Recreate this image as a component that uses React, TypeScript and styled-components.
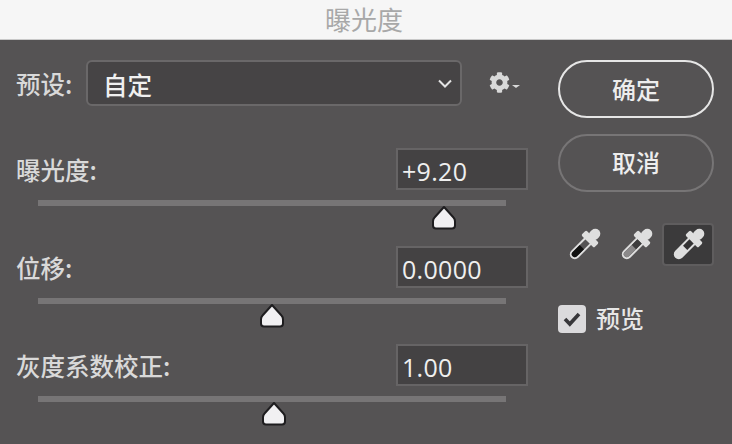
import React from "react";
import styled, { createGlobalStyle } from "styled-components";
import { FaCog } from "react-icons/fa";

const Global = createGlobalStyle`
  html, body { margin: 0; padding: 0; background: #555354; }
  * { box-sizing: border-box; }
`;
const CJK = `"Noto Sans CJK SC", "Liberation Sans", sans-serif`;

const Dialog = styled.div`
  width: 732px; height: 444px; display: flex; flex-direction: column; overflow: hidden;
  background: #555354; font-family: ${CJK};
`;
const TitleBar = styled.header`
  height: 40px; flex: none; display: flex; align-items: center; justify-content: center;
  padding: 0 4px 2px 0;
  background: #f6f6f6; border-bottom: 1px solid #c9c9c9;
  color: #a8a8a8; font-size: 26px; line-height: 36px;
`;
const Body = styled.main`
  flex: 1; display: flex; justify-content: space-between; padding: 20px 18px 0 16px;
`;
const LeftColumn = styled.section`
  width: 512px; display: flex; flex-direction: column;
`;
const PresetRow = styled.div`
  height: 46px; display: flex; align-items: center; margin-bottom: 42px;
`;
const Label = styled.span`
  color: #d9d9d9; font-size: 24.5px; font-weight: 500; line-height: 42px; white-space: nowrap;
  padding-top: 2px;
`;
const PresetLabel = styled(Label)`
  width: 70px; flex: none;
`;
const SelectBox = styled.div`
  width: 376px; height: 46px; flex: none; display: flex; align-items: center; justify-content: space-between;
  padding: 2px 6px 0 15px; background: #464445; border: 2px solid #6a6869; border-radius: 6px;
  color: #f0f0f0; font-size: 24.5px; font-weight: 500;
`;
const GearButton = styled.div`
  margin-left: 27px; display: flex; align-items: center; color: #d9d9d9; position: relative; top: -1px;
`;
const Caret = styled.span`
  margin: 9px 0 0 2px; width: 0; height: 0;
  border-left: 4px solid transparent; border-right: 4px solid transparent; border-top: 3px solid #d9d9d9;
`;
const SliderGroup = styled.div`
  height: 98px; display: flex; flex-direction: column;
`;
const SliderHead = styled.div`
  height: 42px; flex: none; display: flex; justify-content: space-between; align-items: center;
`;
const NumberBox = styled.div`
  width: 132px; height: 42px; display: flex; align-items: center; padding: 3px 0 0 4px;
  background: #444243; border: 2px solid #666465;
  color: #efefef; font-family: "Open Sans", "Liberation Sans", sans-serif; font-size: 25px; letter-spacing: 0.3px;
`;
const Track = styled.div`
  position: relative; height: 6px; margin: 10px 22px 0; background: #777576;
`;
const Thumb = styled.svg<{ $at: number }>`
  position: absolute; top: 6px; left: ${(p) => p.$at}%; width: 24px; height: 24px; margin-left: -12px;
`;
const RightColumn = styled.aside`
  width: 156px; display: flex; flex-direction: column;
`;
const PillButton = styled.button<{ $primary?: boolean }>`
  width: 156px; height: 58px; margin-bottom: 16px; padding: 0 0 ${(p) => (p.$primary ? "1px" : "3px")};
  background: transparent; border-radius: 29px;
  border: 2px solid ${(p) => (p.$primary ? "#e6e6e6" : "#777576")};
  color: #ededed; font-family: ${CJK}; font-size: 24px; font-weight: 500;
`;
const ToolRow = styled.div`
  height: 43px; margin-top: 15px; display: flex;
`;
const Tool = styled.div<{ $active?: boolean }>`
  flex: 1; display: flex; align-items: center; justify-content: center; border-radius: 4px;
  background: ${(p) => (p.$active ? "#3b3a3b" : "transparent")};
  border: 2px solid ${(p) => (p.$active ? "#5f5d5e" : "transparent")};
`;
const PreviewRow = styled.label`
  margin-top: 39px; height: 28px; display: flex; align-items: center; gap: 10px;
  color: #e6e6e6; font-size: 24px; font-weight: 500;
`;
const PreviewText = styled.span`
  margin-top: -3px;
`;
const CheckBox = styled.span`
  width: 28px; height: 28px; display: flex; align-items: center; justify-content: center;
  background: #dbdadc; border-radius: 4px;
`;

const ThumbIcon = ({ at }: { at: number }) => (
  <Thumb $at={at} viewBox="0 0 24 24">
    <path
      d="M12 1 L21.5 11.5 Q23 13 23 15.5 L23 19.5 Q23 22.5 20 22.5 L4 22.5 Q1 22.5 1 19.5 L1 15.5 Q1 13 2.5 11.5 Z"
      fill="#f1f0f2" stroke="#1e1d1f" strokeWidth="2" strokeLinejoin="round"
    />
  </Thumb>
);

const Dropper = ({ kind }: { kind: "black" | "gray" | "white" }) => (
  <svg width="34" height="34" viewBox="0 0 34 34">
    <g transform="rotate(45 17 17)">
      <rect x="12" y="-4" width="10" height="12" rx="5" fill="#dedede" />
      <rect x="8" y="5" width="18" height="7" rx="1.5" fill="#dedede" />
      {kind === "black" && (
        <>
          <path d="M13 11 H21 V30 a4 4 0 0 1 -8 0 Z" fill="#555354" stroke="#dedede" strokeWidth="2" />
          <path d="M14 20 H20 V30 a3 3 0 0 1 -6 0 Z" fill="#111" />
        </>
      )}
      {kind === "gray" && (
        <>
          <path d="M13 11 H21 V30 a4 4 0 0 1 -8 0 Z" fill="#555354" stroke="#dedede" strokeWidth="2" />
          <path d="M14 12 H20 V20 H14 Z" fill="#3d3c3d" />
          <path d="M14 20 H20 V30 a3 3 0 0 1 -6 0 Z" fill="#8b898a" />
        </>
      )}
      {kind === "white" && (
        <>
          <path d="M12 11 H22 V30 a5 5 0 0 1 -10 0 Z" fill="#dedede" />
          <path d="M14 12 H20 V21 H14 Z" fill="#333233" />
        </>
      )}
    </g>
  </svg>
);

const sliders = [
  { label: "曝光度:", value: "+9.20", at: 86.75 },
  { label: "位移:", value: "0.0000", at: 50 },
  { label: "灰度系数校正:", value: "1.00", at: 50.4 },
];

export default function App() {
  return (
    <Dialog>
      <Global />
      <TitleBar>曝光度</TitleBar>
      <Body>
        <LeftColumn>
          <PresetRow>
            <PresetLabel>预设:</PresetLabel>
            <SelectBox>
              自定
              <svg width="18" height="12" viewBox="0 0 18 12">
                <path d="M3 2.5 L9 8.5 L15 2.5" fill="none" stroke="#e4e4e4" strokeWidth="2" />
              </svg>
            </SelectBox>
            <GearButton>
              <FaCog size={21} />
              <Caret />
            </GearButton>
          </PresetRow>
          {sliders.map((s) => (
            <SliderGroup key={s.label}>
              <SliderHead>
                <Label>{s.label}</Label>
                <NumberBox>{s.value}</NumberBox>
              </SliderHead>
              <Track>
                <ThumbIcon at={s.at} />
              </Track>
            </SliderGroup>
          ))}
        </LeftColumn>
        <RightColumn>
          <PillButton $primary>确定</PillButton>
          <PillButton>取消</PillButton>
          <ToolRow>
            <Tool><Dropper kind="black" /></Tool>
            <Tool><Dropper kind="gray" /></Tool>
            <Tool $active><Dropper kind="white" /></Tool>
          </ToolRow>
          <PreviewRow>
            <CheckBox>
              <svg width="18" height="16" viewBox="0 0 18 16">
                <path d="M2 8 L6.8 13 L16 3" fill="none" stroke="#38373a" strokeWidth="3.6" />
              </svg>
            </CheckBox>
            <PreviewText>预览</PreviewText>
          </PreviewRow>
        </RightColumn>
      </Body>
    </Dialog>
  );
}
